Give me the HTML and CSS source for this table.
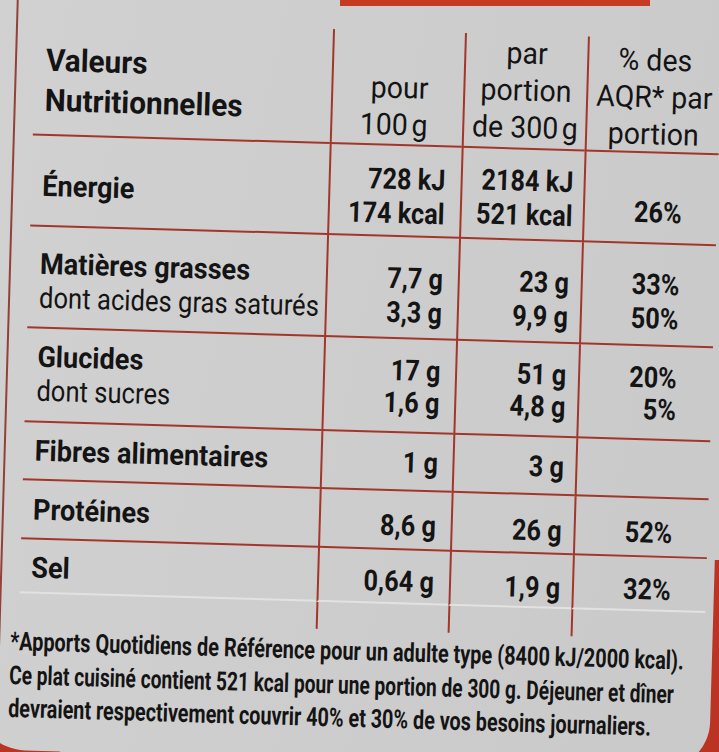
FILE: index.html
```html
<!DOCTYPE html>
<html lang="fr">
<head>
<meta charset="utf-8">
<title>Valeurs Nutritionnelles</title>
<link rel="stylesheet" href="styles.css">
</head>
<body>
<div class="photo">
  <div class="sheet">
    <div class="panel">
      <div class="grid">
        <div class="row hd">
          <div class="c lab"><span class="t">Valeurs<br>Nutritionnelles</span></div>
          <div class="c n1"><span class="t">pour<br>100&#8239;g</span></div>
          <div class="c n2"><span class="t">par<br>portion<br>de 300&#8239;g</span></div>
          <div class="c pct"><span class="t">% des<br>AQR* par<br>portion</span></div>
        </div>
        <div class="row en">
          <div class="c lab"><span class="t">Énergie</span></div>
          <div class="c n1"><span class="t">728 kJ<br>174 kcal</span></div>
          <div class="c n2"><span class="t">2184 kJ<br>521 kcal</span></div>
          <div class="c pct"><span class="t">26%</span></div>
        </div>
        <div class="row fat">
          <div class="c lab"><span class="t">Matières grasses<br><span class="sub">dont acides gras saturés</span></span></div>
          <div class="c n1"><span class="t">7,7 g<br>3,3 g</span></div>
          <div class="c n2"><span class="t">23 g<br>9,9 g</span></div>
          <div class="c pct"><span class="t">33%<br>50%</span></div>
        </div>
        <div class="row glu">
          <div class="c lab"><span class="t">Glucides<br><span class="sub">dont sucres</span></span></div>
          <div class="c n1"><span class="t">17 g<br>1,6 g</span></div>
          <div class="c n2"><span class="t">51 g<br>4,8 g</span></div>
          <div class="c pct"><span class="t">20%<br>5%</span></div>
        </div>
        <div class="row fib">
          <div class="c lab"><span class="t">Fibres alimentaires</span></div>
          <div class="c n1"><span class="t">1 g</span></div>
          <div class="c n2"><span class="t">3 g</span></div>
          <div class="c pct"></div>
        </div>
        <div class="row pro">
          <div class="c lab"><span class="t">Protéines</span></div>
          <div class="c n1"><span class="t">8,6 g</span></div>
          <div class="c n2"><span class="t">26 g</span></div>
          <div class="c pct"><span class="t">52%</span></div>
        </div>
        <div class="row sel">
          <div class="c lab"><span class="t">Sel</span></div>
          <div class="c n1"><span class="t">0,64 g</span></div>
          <div class="c n2"><span class="t">1,9 g</span></div>
          <div class="c pct"><span class="t">32%</span></div>
        </div>
        <div class="row end">
          <div class="c lab"></div>
          <div class="c n1"></div>
          <div class="c n2"></div>
          <div class="c pct"></div>
        </div>
      </div>
      <p class="note"><span class="ln l1">*Apports Quotidiens de Référence pour un adulte type (8400 kJ/2000 kcal).</span><span class="ln l2">Ce plat cuisiné contient 521 kcal pour une portion de 300 g. Déjeuner et dîner</span><span class="ln l3">devraient respectivement couvrir 40% et 30% de vos besoins journaliers.</span></p>
    </div>
  </div>
  <div class="redbar"></div>
  <div class="lclip"><div class="lc"></div></div>
  <div class="rclip"><div class="rc"></div></div>
</div>
</body>
</html>
```
FILE: styles.css
```css
body {
  margin: 0;
}

.photo {
  position: relative;
  width: 719px;
  height: 752px;
  overflow: hidden;
  background: #cbcbcb;
  font-family: Roboto, "Liberation Sans", sans-serif;
  color: #141414;
}

.sheet {
  width: 780px;
  height: 790px;
  margin: -30px 0 0 -14px;
  padding-left: 20px;
  box-sizing: border-box;
  background: linear-gradient(100deg, #d1d1d1 0%, #cdcdcd 50%, #c9c9c9 100%);
  transform: rotate(1.66deg);
  transform-origin: 374px 406px;
}

.panel {
  height: 100%;
  box-sizing: border-box;
  border-left: 2px solid #934039;
  padding: 60px 0 0 18px;
}

.grid {
  display: grid;
  grid-template-columns: 297px 132px 123px 134px;
  grid-template-rows: 115px 91px 102px 94px 58px 59px 54px 27px;
}

.row {
  display: contents;
}

.c {
  box-sizing: border-box;
  border-bottom: 2px solid #a3362a;
  font-size: 29px;
  line-height: 34px;
  font-weight: 700;
  white-space: nowrap;
}

.t {
  display: inline-block;
  transform: scaleX(0.87);
}

.n1,
.n2,
.pct {
  border-left: 2px solid #a3362a;
  text-align: right;
}

.n1 .t,
.n2 .t,
.pct .t {
  transform-origin: right center;
}

.lab {
  padding-left: 11px;
}

.lab .t {
  transform: scaleX(0.935);
  transform-origin: left center;
}

.sub {
  display: inline-block;
  font-weight: 400;
  transform: scaleX(0.944);
  transform-origin: left center;
}

.n1 {
  padding-right: 15px;
}

.n2 {
  padding-right: 12px;
}

.pct {
  padding-right: 35px;
}

/* header */
.hd .c {
  font-weight: 400;
  font-size: 30px;
  line-height: 37px;
}

.hd .c .t {
  transform: scaleX(0.95);
}

.hd .lab {
  font-weight: 700;
  font-size: 31px;
  line-height: 40px;
  padding-top: 20px;
}

.hd .lab .t {
  transform: scaleX(0.96);
}

.hd .n1 {
  padding-top: 38px;
  padding-right: 35px;
}

.hd .n2 {
  padding-top: 0;
  padding-right: 0;
  text-align: center;
}

.hd .pct {
  padding-top: 3px;
  padding-right: 0;
  text-align: center;
}

.hd .n2 .t,
.hd .pct .t {
  transform-origin: center center;
}

/* rows */
.en .lab { padding-top: 33px; }
.en .n1 { padding-top: 16px; }
.en .n2 { padding-top: 14px; }
.en .pct { padding-top: 42px; }

.fat .lab { padding-top: 20px; }
.fat .n1,
.fat .n2 { padding-top: 24px; }
.fat .pct { padding-top: 23px; }

.glu .lab { padding-top: 11px; }
.glu .n1,
.glu .n2,
.glu .pct { padding-top: 15px; line-height: 32px; }

.fib .lab { padding-top: 11px; }
.fib .n1,
.fib .n2 { padding-top: 12px; }

.pro .lab { padding-top: 12px; }
.pro .n1 { padding-top: 17px; }
.pro .n2 { padding-top: 18px; }
.pro .pct { padding-top: 17px; }

.sel .c {
  border-bottom: 2px solid #e2e2e2;
}

.sel .lab { padding-top: 11px; }
.sel .n1 { padding-top: 14px; }
.sel .n2 { padding-top: 16px; }
.sel .pct { padding-top: 15px; }

.end .c {
  border-bottom: 0;
}

.note {
  margin: 0 0 0 -8px;
  padding-top: 5px;
  font-size: 26px;
  line-height: 33.5px;
  font-weight: 700;
  white-space: nowrap;
}

.ln {
  display: block;
  width: max-content;
  transform-origin: left center;
}

.l1 {
  transform: scaleX(0.765);
}

.l2 {
  transform: scaleX(0.737);
}

.l3 {
  transform: scaleX(0.761);
}

.redbar {
  position: absolute;
  top: 0;
  left: 340px;
  width: 310px;
  height: 6px;
  background: #c63a24;
}

.lclip {
  position: absolute;
  left: 0;
  top: 640px;
  width: 60px;
  bottom: 0;
  overflow: hidden;
}

.lc {
  position: absolute;
  left: -14px;
  top: -670px;
  width: 200px;
  height: 790px;
  border-radius: 0 0 0 50px;
  box-shadow: 0 0 0 60px #bb3423;
  transform: rotate(1.66deg);
  transform-origin: 374px 406px;
}

.rclip {
  position: absolute;
  left: 660px;
  top: 560px;
  right: 0;
  bottom: 0;
  overflow: hidden;
}

.rc {
  position: absolute;
  left: -100px;
  top: -590px;
  width: 160px;
  height: 790px;
  border-radius: 0 0 48px 0;
  box-shadow: 0 0 0 60px #bb3423;
  transform: rotate(1.66deg);
  transform-origin: -200px 406px;
}
```
